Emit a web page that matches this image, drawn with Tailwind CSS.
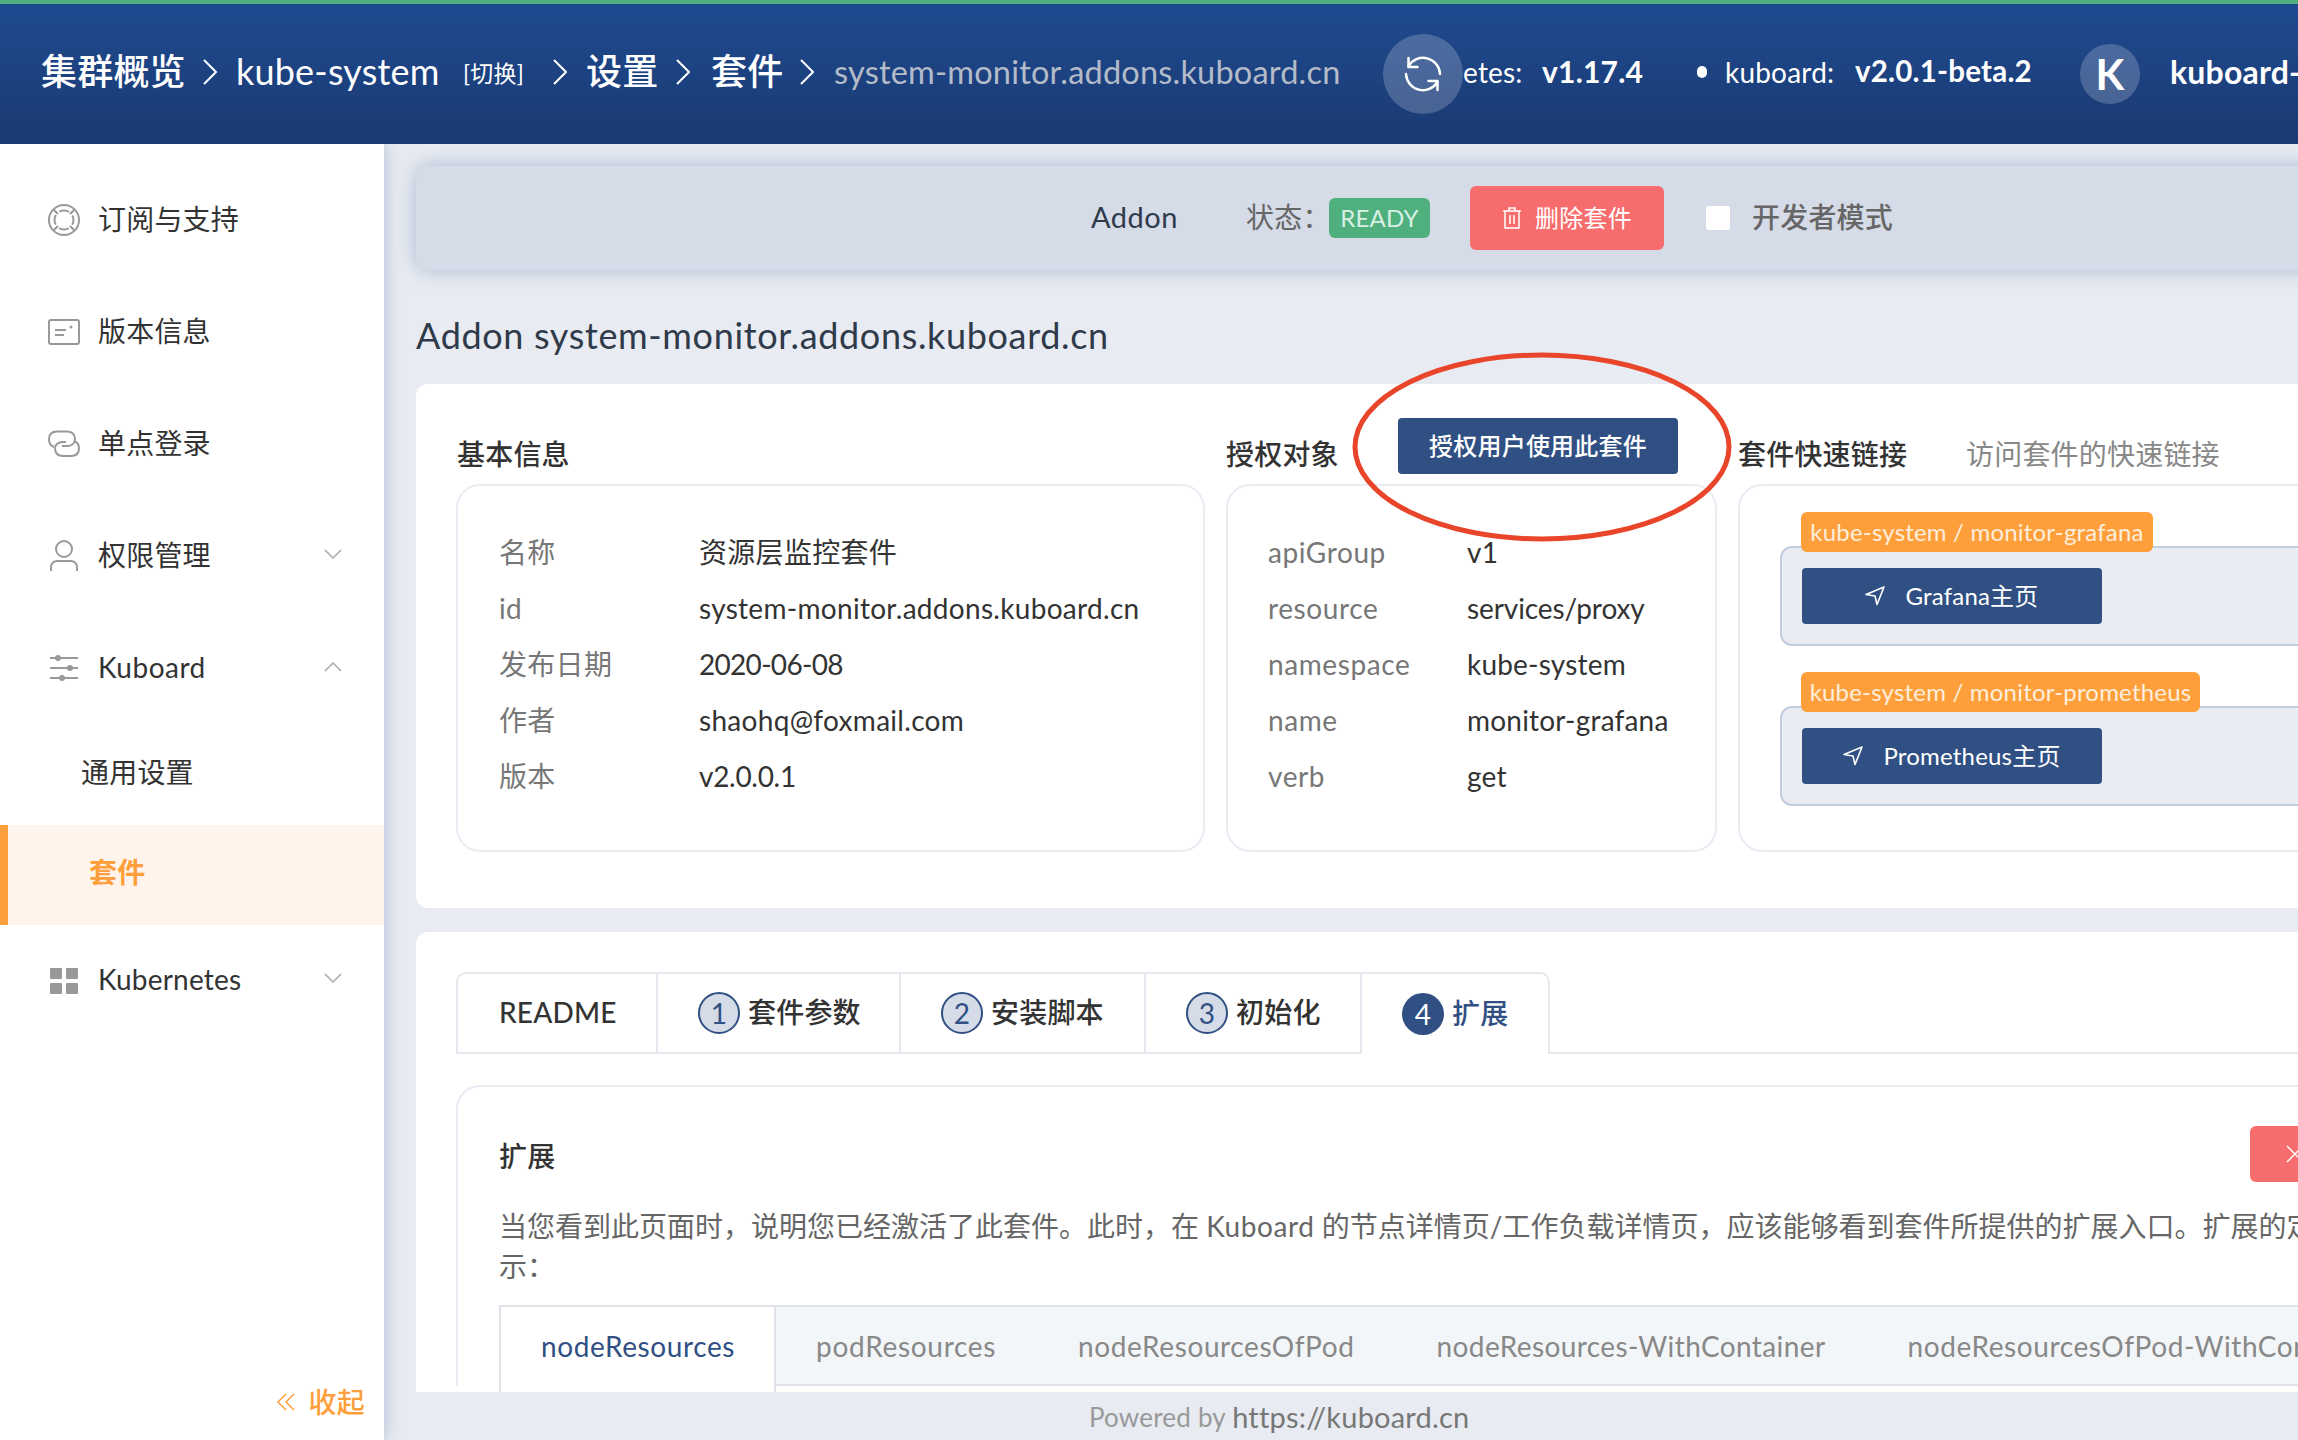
<!DOCTYPE html>
<html lang="zh-CN">
  <head>
    <meta charset="UTF-8" />
    <title>Kuboard</title>
    <script src="https://cdn.jsdelivr.net/npm/@tailwindcss/browser@4"></script>
  </head>
  <body class="m-0">
    <div class="relative w-[2298px] h-[1440px] overflow-hidden flex flex-col bg-[#e8ebf1] font-[Lato,'Noto_Sans_CJK_SC',sans-serif] text-[28px] text-[#333] tracking-[0.2px]">
      <!-- header -->
      <header class="h-[144px] shrink-0 border-t-4 border-[#4fb07d] bg-linear-to-b from-[#1f4a90] to-[#1a3a72] flex items-center pl-[41px] whitespace-nowrap text-white relative z-20 overflow-hidden">
        <span class="shrink-0 text-[36px] font-medium w-[144px] pb-[6px]">集群概览</span>
        <svg class="shrink-0 ml-[18px] w-[14px] h-[26px] mb-[4px]" viewBox="0 0 14 26" fill="none" stroke="#fff" stroke-width="2"><path d="M1 1l12 12L1 25" /></svg>
        <span class="shrink-0 ml-[19px] text-[36px] w-[206px] pb-[6px]">kube-system</span>
        <span class="shrink-0 ml-[21px] text-[23px] w-[60px] pb-[2px]">[切换]</span>
        <svg class="shrink-0 ml-[30px] w-[14px] h-[26px] mb-[4px]" viewBox="0 0 14 26" fill="none" stroke="#fff" stroke-width="2"><path d="M1 1l12 12L1 25" /></svg>
        <span class="shrink-0 ml-[19px] text-[36px] font-medium w-[72px] pb-[6px]">设置</span>
        <svg class="shrink-0 ml-[18px] w-[14px] h-[26px] mb-[4px]" viewBox="0 0 14 26" fill="none" stroke="#fff" stroke-width="2"><path d="M1 1l12 12L1 25" /></svg>
        <span class="shrink-0 ml-[21px] text-[36px] font-medium w-[72px] pb-[6px]">套件</span>
        <svg class="shrink-0 ml-[17px] w-[14px] h-[26px] mb-[4px]" viewBox="0 0 14 26" fill="none" stroke="#fff" stroke-width="2"><path d="M1 1l12 12L1 25" /></svg>
        <span class="shrink-0 ml-[20px] text-[32.5px] text-[#b4bbc9] w-[508px] pb-[4px]">system-monitor.addons.kuboard.cn</span>
        <div class="ml-[41px] w-[80px] h-[80px] rounded-full bg-white/20 flex items-center justify-center shrink-0">
          <svg class="w-[40px] h-[40px]" viewBox="0 0 40 40" fill="none" stroke="#fff" stroke-width="2.5" stroke-linecap="round" stroke-linejoin="round">
            <path d="M5.5 12A17 17 0 0 1 37 20" /><path d="M5.5 4v9h9" /><path d="M3 20A17 17 0 0 0 34.5 28" /><path d="M34.5 36v-9h-9" />
          </svg>
        </div>
        <span class="shrink-0 w-[60px] text-[28px] pb-[4px]">etes:</span>
        <span class="shrink-0 ml-[19px] w-[100px] text-[30px] font-bold pb-[6px]">v1.17.4</span>
        <span class="shrink-0 ml-[55px] w-[10px] h-[12px] rounded-full bg-white mb-[4px]"></span>
        <span class="shrink-0 ml-[18px] w-[110px] text-[28px] pb-[4px]">kuboard:</span>
        <span class="shrink-0 ml-[20px] w-[176px] text-[29.5px] font-bold pb-[6px]">v2.0.1-beta.2</span>
        <div class="ml-[49px] w-[60px] h-[60px] rounded-full bg-white/20 flex items-center justify-center text-[42px] font-bold shrink-0">K</div>
        <span class="shrink-0 ml-[30px] text-[32px] font-bold pb-[4px]">kuboard-</span>
      </header>

      <div class="flex-1 flex min-h-0">
        <!-- sidebar -->
        <aside class="w-[384px] shrink-0 bg-white relative z-10 shadow-[0_0_16px_#a9b9d3] flex flex-col pt-[20px] whitespace-nowrap">
          <div class="h-[112px] flex items-center pl-[48px]">
            <svg class="w-[32px] h-[32px]" viewBox="0 0 32 32" fill="none" stroke="#999" stroke-width="2"><circle cx="16" cy="16" r="15" /><circle cx="16" cy="16" r="9.5" stroke-dasharray="10 4.92" stroke-dashoffset="5" /><path d="M5.5 5.5l4.5 4.5M26.5 5.5L22 10M5.5 26.5L10 22M26.5 26.5L22 22" /></svg>
            <span class="ml-[18px] pb-[3px]">订阅与支持</span>
          </div>
          <div class="h-[112px] flex items-center pl-[48px]">
            <svg class="w-[32px] h-[26px]" viewBox="0 0 32 26" fill="none" stroke="#999" stroke-width="2"><rect x="1" y="1" width="30" height="24" rx="2" /><path d="M7 11h11M7 16h9" /><circle cx="23" cy="8" r="1.5" fill="#999" stroke="none" /></svg>
            <span class="ml-[18px] pb-[3px]">版本信息</span>
          </div>
          <div class="h-[112px] flex items-center pl-[48px]">
            <svg class="w-[32px] h-[28px]" viewBox="0 0 32 28" fill="none" stroke="#999" stroke-width="2"><path d="M6 17C3 16 1 13 1 9C1 4 4 1.5 9 1.5H19C24 1.5 27 4.5 27 9C27 13 24 16 19 16H14" /><path d="M26 11C29 12 31 15 31 18C31 23 28 26 23 26H15C10 26 7 23 7 18C7 15 10 12 15 12H18" /></svg>
            <span class="ml-[18px] pb-[3px]">单点登录</span>
          </div>
          <div class="h-[112px] flex items-center pl-[48px]">
            <svg class="w-[32px] h-[32px]" viewBox="0 0 32 32" fill="none" stroke="#999" stroke-width="2"><circle cx="16" cy="9" r="8" /><path d="M3 31v-4a6 6 0 0 1 6-6h14a6 6 0 0 1 6 6v4" /></svg>
            <span class="ml-[18px] w-[226px] pb-[3px]">权限管理</span>
            <svg class="w-[18px] h-[10px] mb-[5px]" viewBox="0 0 18 10" fill="none" stroke="#aaa" stroke-width="1.5"><path d="M1 1l8 8 8-8" /></svg>
          </div>
          <div class="h-[112px] flex items-center pl-[48px]">
            <svg class="w-[32px] h-[28px]" viewBox="0 0 32 28" fill="none" stroke="#999" stroke-width="2"><path d="M2 4h28M2 14h28M2 24h28" /><circle cx="10" cy="4" r="3" fill="#999" stroke="none" /><circle cx="22" cy="14" r="3" fill="#999" stroke="none" /><circle cx="14" cy="24" r="3" fill="#999" stroke="none" /></svg>
            <span class="ml-[18px] w-[226px] pb-[3px] tracking-[0.5px]">Kuboard</span>
            <svg class="w-[18px] h-[10px] mb-[3px]" viewBox="0 0 18 10" fill="none" stroke="#aaa" stroke-width="1.5"><path d="M1 9l8-8 8 8" /></svg>
          </div>
          <div class="h-[101px] flex items-center pl-[81px] pb-[6px]">通用设置</div>
          <div class="h-[100px] flex items-center pl-[81px] pb-[6px] border-l-8 border-[#ff9f3b] bg-[#fef4eb] text-[#ff9f3b] font-bold">套件</div>
          <div class="h-[112px] flex items-center pl-[48px]">
            <svg class="w-[32px] h-[28px]" viewBox="0 0 32 28" fill="#999"><rect x="2" y="1" width="12" height="11" rx="1" /><rect x="18" y="1" width="12" height="11" rx="1" /><rect x="2" y="16" width="12" height="11" rx="1" /><rect x="18" y="16" width="12" height="11" rx="1" /></svg>
            <span class="ml-[18px] w-[226px] pb-[5px]">Kubernetes</span>
            <svg class="w-[18px] h-[10px] mb-[7px]" viewBox="0 0 18 10" fill="none" stroke="#aaa" stroke-width="1.5"><path d="M1 1l8 8 8-8" /></svg>
          </div>
          <div class="mt-auto mb-[17px] flex items-center justify-end pr-[19px] text-[#ff9f3b] font-medium">
            <svg class="w-[20px] h-[18px]" viewBox="0 0 20 18" fill="none" stroke="#ff9f3b" stroke-width="1.5"><path d="M10 1L2 9l8 8M18 1l-8 8 8 8" /></svg>
            <span class="ml-[13px]">收起</span>
          </div>
        </aside>

        <!-- main -->
        <main class="flex-1 min-w-0 flex flex-col">
          <div class="flex-1 min-h-0 overflow-hidden pl-[32px] pt-[22px] whitespace-nowrap">
            <!-- action bar -->
            <div class="w-[2100px] h-[104px] rounded-l-[12px] bg-[#d5dbe7] shadow-[0_0_20px_#a9b9d3] flex items-center pl-[675px]">
              <span class="w-[86px] text-[29px] tracking-[0.5px] text-[#2f3a4a] pb-[3px]">Addon</span>
              <span class="ml-[69px] w-[72px] text-[#666] pb-[3px]">状态：</span>
              <span class="ml-[11px] w-[101px] h-[40px] rounded-[6px] bg-[#4fb07d] text-[#d8f0e4] text-[24px] flex items-center justify-center">READY</span>
              <button class="ml-[40px] w-[194px] h-[64px] rounded-[6px] bg-[#f76d6d] text-white text-[24px] flex items-center justify-center">
                <svg class="w-[20px] h-[22px] mr-[13px]" viewBox="0 0 20 22" fill="none" stroke="#fff" stroke-width="1.5"><path d="M1 4h18M3 4v17h14V4M7 4V1h6v3M8 8v9M12 8v9" /></svg>
                删除套件
              </button>
              <span class="ml-[42px] w-[24px] h-[24px] rounded-[2px] bg-white"></span>
              <span class="ml-[22px] text-[#666] font-medium pb-[3px]">开发者模式</span>
            </div>

            <div class="mt-[41px] h-[50px] flex items-center text-[36px] tracking-[0.65px] text-[#2f3a4a] pb-[3px]">Addon system-monitor.addons.kuboard.cn</div>

            <!-- basic info card -->
            <section class="mt-[23px] w-[2100px] h-[524px] rounded-l-[12px] bg-white pt-[50px] pl-[40px] flex gap-[21px]">
              <div class="w-[749px] shrink-0">
                <div class="h-[40px] mb-[10px] pl-[1px] flex items-center font-medium">基本信息</div>
                <div class="h-[368px] rounded-[24px] border-2 border-[#e9ecf3] pt-[38px] pl-[41px] grid grid-cols-[200px_1fr] auto-rows-[56px] items-center tracking-[0.3px]">
                  <span class="text-[#777]">名称</span><span>资源层监控套件</span>
                  <span class="text-[#777]">id</span><span>system-monitor.addons.kuboard.cn</span>
                  <span class="text-[#777]">发布日期</span><span class="tracking-[-0.7px]">2020-06-08</span>
                  <span class="text-[#777]">作者</span><span>shaohq@foxmail.com</span>
                  <span class="text-[#777]">版本</span><span class="tracking-[-0.3px]">v2.0.0.1</span>
                </div>
              </div>
              <div class="w-[491px] shrink-0">
                <div class="h-[40px] mb-[10px] flex items-center font-medium">
                  <span class="w-[172px]">授权对象</span>
                  <button class="mb-[16px] w-[280px] h-[56px] rounded-[4px] bg-[#305083] text-white text-[24px] flex items-center justify-center">授权用户使用此套件</button>
                </div>
                <div class="h-[368px] rounded-[24px] border-2 border-[#e9ecf3] pt-[38px] pl-[40px] grid grid-cols-[199px_1fr] auto-rows-[56px] items-center">
                  <span class="text-[#777] tracking-[0.6px]">apiGroup</span><span>v1</span>
                  <span class="text-[#777] tracking-[0.6px]">resource</span><span class="tracking-[-0.1px]">services/proxy</span>
                  <span class="text-[#777] tracking-[0.6px]">namespace</span><span>kube-system</span>
                  <span class="text-[#777] tracking-[0.6px]">name</span><span>monitor-grafana</span>
                  <span class="text-[#777] tracking-[0.6px]">verb</span><span>get</span>
                </div>
              </div>
              <div class="flex-1">
                <div class="h-[40px] mb-[10px] flex items-center font-medium">
                  <span class="w-[228px]">套件快速链接</span>
                  <span class="font-normal text-[#888]">访问套件的快速链接</span>
                </div>
                <div class="h-[368px] rounded-[24px] border-2 border-[#e9ecf3] pl-[40px] pt-[60px]">
                  <div class="relative h-[100px] w-[700px] rounded-l-[12px] border-2 border-[#c0cde0] bg-[#e9ecf3] pl-[20px] pt-[20px]">
                    <span class="absolute left-[19px] top-[-36px] h-[40px] w-[352px] rounded-[6px] bg-[#ff9f3b] text-[#fdeedd] text-[24px] flex items-center justify-center">kube-system / monitor-grafana</span>
                    <button class="w-[300px] h-[56px] rounded-[4px] bg-[#305083] text-white text-[24px] flex items-center justify-center">
                      <svg class="w-[20px] h-[20px] mr-[20px]" viewBox="0 0 20 20" fill="none" stroke="#fff" stroke-width="1.6" stroke-linejoin="round"><path d="M19 1L1 8.5L10 10L12 18.5Z" /></svg>
                      Grafana主页
                    </button>
                  </div>
                  <div class="relative mt-[60px] h-[100px] w-[700px] rounded-l-[12px] border-2 border-[#c0cde0] bg-[#e9ecf3] pl-[20px] pt-[20px]">
                    <span class="absolute left-[19px] top-[-36px] h-[40px] w-[399px] rounded-[6px] bg-[#ff9f3b] text-[#fdeedd] text-[24px] flex items-center justify-center">kube-system / monitor-prometheus</span>
                    <button class="w-[300px] h-[56px] rounded-[4px] bg-[#305083] text-white text-[24px] flex items-center justify-center">
                      <svg class="w-[20px] h-[20px] mr-[20px]" viewBox="0 0 20 20" fill="none" stroke="#fff" stroke-width="1.6" stroke-linejoin="round"><path d="M19 1L1 8.5L10 10L12 18.5Z" /></svg>
                      Prometheus主页
                    </button>
                  </div>
                </div>
              </div>
            </section>

            <!-- steps card -->
            <section class="mt-[24px] w-[2100px] h-[700px] rounded-l-[12px] bg-white pt-[40px] pl-[40px]">
              <div class="flex h-[82px] font-medium">
                <div class="w-[200px] flex items-center pl-[41px] pb-[2px] rounded-tl-[10px] border-2 border-r-0 border-[#e4e8ee]">README</div>
                <div class="w-[243px] flex items-center pl-[40px] border-y-2 border-l-2 border-[#e4e8ee]">
                  <span class="w-[42px] h-[42px] rounded-full border-2 border-[#305083] bg-[#d5dbe7] text-[#305083] font-normal flex items-center justify-center">1</span>
                  <span class="ml-[8px] pb-[2px]">套件参数</span>
                </div>
                <div class="w-[245px] flex items-center pl-[40px] border-y-2 border-l-2 border-[#e4e8ee]">
                  <span class="w-[42px] h-[42px] rounded-full border-2 border-[#305083] bg-[#d5dbe7] text-[#305083] font-normal flex items-center justify-center">2</span>
                  <span class="ml-[8px] pb-[2px]">安装脚本</span>
                </div>
                <div class="w-[216px] flex items-center pl-[40px] border-y-2 border-l-2 border-[#e4e8ee]">
                  <span class="w-[42px] h-[42px] rounded-full border-2 border-[#305083] bg-[#d5dbe7] text-[#305083] font-normal flex items-center justify-center">3</span>
                  <span class="ml-[8px] pb-[2px]">初始化</span>
                </div>
                <div class="w-[190px] flex items-center pl-[40px] rounded-tr-[10px] border-2 border-b-0 border-[#e4e8ee] text-[#305083]">
                  <span class="w-[42px] h-[42px] rounded-full bg-[#305083] text-white font-normal flex items-center justify-center">4</span>
                  <span class="ml-[8px] pb-[2px]">扩展</span>
                </div>
                <div class="flex-1 border-b-2 border-[#e4e8ee]"></div>
              </div>
              <div class="mt-[31px] rounded-tl-[24px] border-t-2 border-l-2 border-[#e9ecf3] pl-[41px] pt-[39px]">
                <div class="w-[1871px] h-[56px] flex items-center justify-between">
                  <span class="font-medium pt-[4px]">扩展</span>
                  <button class="w-[120px] h-[56px] rounded-[6px] bg-[#f76d6d] text-white text-[28px] flex items-center justify-center">
                    <svg class="w-[18px] h-[18px] mr-[30px]" viewBox="0 0 18 18" fill="none" stroke="#fff" stroke-width="1.5"><path d="M1 1l16 16M17 1L1 17" /></svg>
                  </button>
                </div>
                <p class="mt-[24px] leading-[40px] text-[#666] tracking-normal">当您看到此页面时，说明您已经激活了此套件。此时，在 <span class="tracking-[0.6px]">Kuboard</span> 的节点详情页/工作负载详情页，应该能够看到套件所提供的扩展入口。扩展的定义如下图所<br />示：</p>
                <div class="mt-[19px] flex h-[81px] border-t-2 border-b-2 border-[#dfe3e9] bg-[#f3f6f9] text-[#888] tracking-[0.6px] -mr-[100px]">
                  <div class="w-[277px] h-[90px] shrink-0 border-l-2 border-r-2 border-[#dfe3e9] bg-white text-[#305083] flex items-center pl-[40px] pb-[13px]">nodeResources</div>
                  <div class="flex items-center pl-[40px] pr-[41px] gap-[82px]">
                    <span class="tracking-[0.7px]">podResources</span>
                    <span>nodeResourcesOfPod</span>
                    <span class="tracking-[0.4px]">nodeResources-WithContainer</span>
                    <span>nodeResourcesOfPod-WithContainer</span>
                  </div>
                </div>
              </div>
            </section>
          </div>
          <footer class="h-[48px] shrink-0 bg-[#e8ebf1] flex items-center pl-[705px] pt-[2px] text-[26px] text-[#999] whitespace-nowrap relative">
            Powered by&nbsp;<span class="text-[29px] text-[#777]">https://kuboard.cn</span>
          </footer>
        </main>
      </div>

      <!-- hand drawn circle marking the button -->
      <svg class="absolute left-[1345px] top-[346px] z-30 pointer-events-none" width="396" height="204" viewBox="0 0 396 204" fill="none">
        <ellipse cx="197" cy="101" rx="187" ry="92" stroke="#e8452a" stroke-width="5" />
      </svg>
    </div>
  </body>
</html>
